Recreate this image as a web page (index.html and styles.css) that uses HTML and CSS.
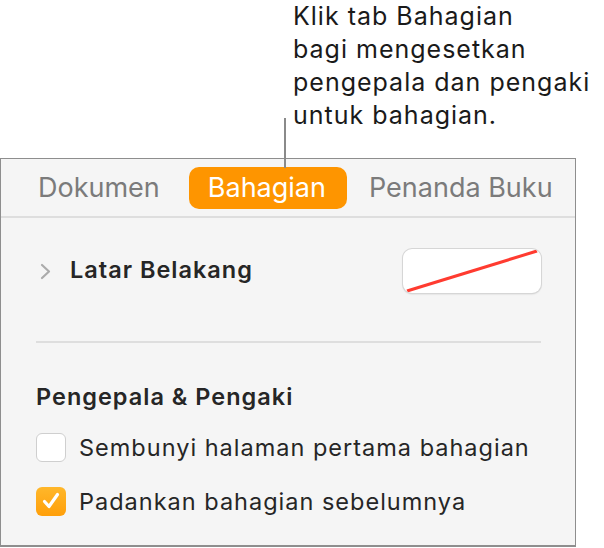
FILE: index.html
```html
<!DOCTYPE html>
<html lang="ms">

<head>
    <meta charset="utf-8">
    <title>Bahagian</title>
    <link rel="stylesheet" href="styles.css">
</head>

<body>

    <p class="nota">Klik tab Bahagian<br>bagi mengesetkan<br>pengepala dan pengaki<br>untuk bahagian.</p>

    <div class="penunjuk"></div>

    <section class="panel">
        <nav class="tab">
            <button>Dokumen</button>
            <button class="valgt">Bahagian</button>
            <button>Penanda Buku</button>
        </nav>

        <div class="latar">
            <span class="anak-panah">
                <svg width="12" height="17" viewBox="0 0 12 17">
                    <path d="M2 2 L9 8.5 L2 15" fill="none" stroke="#ababab" stroke-width="2.2" stroke-linecap="round" stroke-linejoin="round" />
                </svg>
            </span>
            <h2>Latar Belakang</h2>
            <div class="warna">
                <svg width="138" height="44" viewBox="0 0 138 44">
                    <line x1="4" y1="42" x2="134" y2="2" stroke="#ff3b30" stroke-width="3" />
                </svg>
            </div>
        </div>

        <hr>

        <h3>Pengepala &amp; Pengaki</h3>

        <label class="pilihan">
            <span class="kotak"></span>
            Sembunyi halaman pertama bahagian
        </label>
        <label class="pilihan">
            <span class="kotak ditanda">
                <svg width="22" height="22" viewBox="0 0 22 22">
                    <path d="M4.5 11.5 L9 16.5 L17.5 4.5" fill="none" stroke="#fff" stroke-width="3.2" stroke-linecap="round" stroke-linejoin="round" />
                </svg>
            </span>
            Padankan bahagian sebelumnya
        </label>
    </section>

</body></html>
```

FILE: styles.css
```css
body {
    margin: 0;
    background-color: white;
    font-family: Inter, "Noto Sans", sans-serif;
    position: relative;
}

.nota {
    margin: 0;
    padding-left: 293px;
    font-size: 25px;
    letter-spacing: 1px;
    line-height: 33px;
    color: #1a1a1a;
    height: 158px;
    box-sizing: border-box;
}

.penunjuk {
    position: absolute;
    left: 284px;
    top: 118px;
    width: 2px;
    height: 50px;
    background-color: #8a8a8a;
}

.panel {
    width: 576px;
    height: 389px;
    box-sizing: border-box;
    border: 1px solid #8e8e8e;
    border-bottom-width: 2px;
    background-color: #f5f5f5;
}

.tab {
    display: flex;
    align-items: center;
    height: 57px;
    padding-left: 18px;
    border-bottom: 2px solid #dedede;
}

.tab button {
    font-family: Inter, "Noto Sans", sans-serif;
    font-size: 27px;
    color: #7b7b7b;
    background: none;
    border: none;
    height: 42px;
    padding: 0 19px 0 19px;
    margin-right: 10px;
    border-radius: 10px;
    white-space: nowrap;
    flex-shrink: 0;
}

.tab .valgt {
    background-color: #fe9500;
    color: white;
    padding-right: 21px;
    margin-right: 3px;
}

.latar {
    display: flex;
    align-items: center;
    height: 44px;
    margin-top: 31px;
    padding-left: 39px;
}

.anak-panah {
    display: flex;
    width: 30px;
}

h2 {
    font-size: 23.5px;
    letter-spacing: 1px;
    font-weight: 600;
    color: #262626;
    margin: 0 0 4px 0;
    flex: 1;
}

.warna {
    width: 138px;
    height: 44px;
    margin-right: 34px;
    background-color: white;
    border-radius: 9px;
    box-shadow: 0 0 0 1px #d6d6d6, 0 1px 2px rgba(0, 0, 0, 0.2);
    overflow: hidden;
}

.warna svg {
    display: block;
}

hr {
    margin: 48px 34px 0 35px;
    border: none;
    height: 2px;
    background-color: #dedede;
}

h3 {
    font-size: 23.5px;
    letter-spacing: 1px;
    font-weight: 600;
    color: #262626;
    margin: 39px 0 0 35px;
}

.pilihan {
    display: flex;
    align-items: center;
    gap: 13px;
    margin-left: 35px;
    font-size: 23.5px;
    letter-spacing: 1px;
    color: #262626;
    height: 30px;
}

h3 + .pilihan {
    margin-top: 21px;
}

.pilihan + .pilihan {
    margin-top: 24px;
}

.kotak {
    width: 30px;
    height: 29px;
    box-sizing: border-box;
    border: 1px solid #cfcfcf;
    border-radius: 6px;
    background-color: white;
    display: flex;
    align-items: center;
    justify-content: center;
}

.ditanda {
    border: none;
    background: linear-gradient(#ffb72a, #ff9f0a);
}
```
